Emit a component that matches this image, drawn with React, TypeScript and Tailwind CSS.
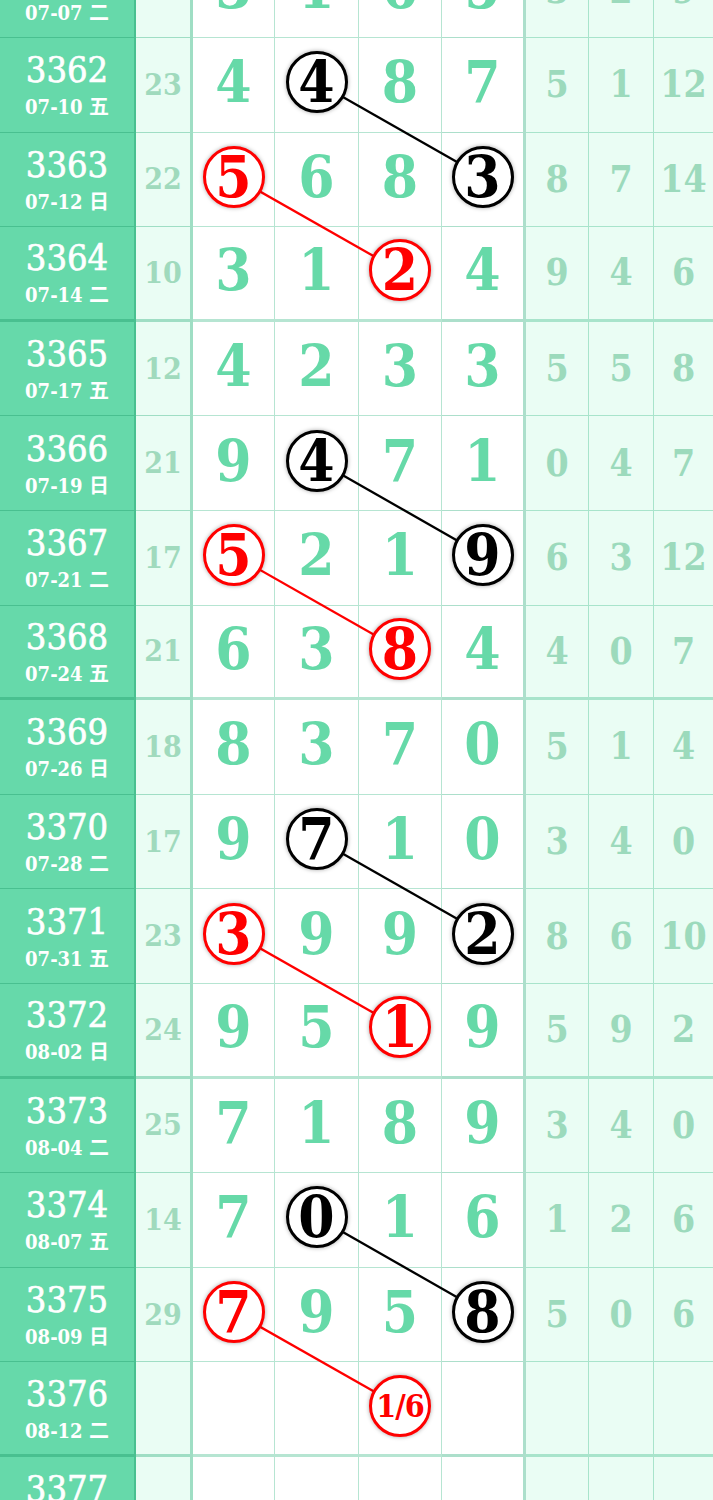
import React from "react";

type Mark = { col: number; color: "red" | "black"; text?: string };
type Row = {
  no: string;
  date: string;
  sum?: string;
  d?: string[];
  r?: string[];
  marks?: Mark[];
};

const rows: Row[] = [
  { no: "3361", date: "07-07 二", sum: "15", d: ["3", "1", "6", "5"], r: ["3", "2", "9"] },
  { no: "3362", date: "07-10 五", sum: "23", d: ["4", "4", "8", "7"], r: ["5", "1", "12"], marks: [{ col: 1, color: "black" }] },
  { no: "3363", date: "07-12 日", sum: "22", d: ["5", "6", "8", "3"], r: ["8", "7", "14"], marks: [{ col: 0, color: "red" }, { col: 3, color: "black" }] },
  { no: "3364", date: "07-14 二", sum: "10", d: ["3", "1", "2", "4"], r: ["9", "4", "6"], marks: [{ col: 2, color: "red" }] },
  { no: "3365", date: "07-17 五", sum: "12", d: ["4", "2", "3", "3"], r: ["5", "5", "8"] },
  { no: "3366", date: "07-19 日", sum: "21", d: ["9", "4", "7", "1"], r: ["0", "4", "7"], marks: [{ col: 1, color: "black" }] },
  { no: "3367", date: "07-21 二", sum: "17", d: ["5", "2", "1", "9"], r: ["6", "3", "12"], marks: [{ col: 0, color: "red" }, { col: 3, color: "black" }] },
  { no: "3368", date: "07-24 五", sum: "21", d: ["6", "3", "8", "4"], r: ["4", "0", "7"], marks: [{ col: 2, color: "red" }] },
  { no: "3369", date: "07-26 日", sum: "18", d: ["8", "3", "7", "0"], r: ["5", "1", "4"] },
  { no: "3370", date: "07-28 二", sum: "17", d: ["9", "7", "1", "0"], r: ["3", "4", "0"], marks: [{ col: 1, color: "black" }] },
  { no: "3371", date: "07-31 五", sum: "23", d: ["3", "9", "9", "2"], r: ["8", "6", "10"], marks: [{ col: 0, color: "red" }, { col: 3, color: "black" }] },
  { no: "3372", date: "08-02 日", sum: "24", d: ["9", "5", "1", "9"], r: ["5", "9", "2"], marks: [{ col: 2, color: "red" }] },
  { no: "3373", date: "08-04 二", sum: "25", d: ["7", "1", "8", "9"], r: ["3", "4", "0"] },
  { no: "3374", date: "08-07 五", sum: "14", d: ["7", "0", "1", "6"], r: ["1", "2", "6"], marks: [{ col: 1, color: "black" }] },
  { no: "3375", date: "08-09 日", sum: "29", d: ["7", "9", "5", "8"], r: ["5", "0", "6"], marks: [{ col: 0, color: "red" }, { col: 3, color: "black" }] },
  { no: "3376", date: "08-12 二", marks: [{ col: 2, color: "red", text: "1/6" }] },
  { no: "3377", date: "08-15 五" },
];

const RH = 94.6;
const CY = 44.3;
const COLX = [233.5, 316.5, 400, 482.5];

const links: { a: [number, number]; b: [number, number]; color: string }[] = [
  { a: [1, 1], b: [2, 3], color: "#000" },
  { a: [2, 0], b: [3, 2], color: "#ff0000" },
  { a: [5, 1], b: [6, 3], color: "#000" },
  { a: [6, 0], b: [7, 2], color: "#ff0000" },
  { a: [9, 1], b: [10, 3], color: "#000" },
  { a: [10, 0], b: [11, 2], color: "#ff0000" },
  { a: [13, 1], b: [14, 3], color: "#000" },
  { a: [14, 0], b: [15, 2], color: "#ff0000" },
];

const midW = ["w-[82px]", "w-[84px]", "w-[83px]", "w-[84px]"];
const rightW = ["w-[63px]", "w-[65px]", "flex-1"];

function Circle({ m, value }: { m: Mark; value: string }) {
  const red = m.color === "red";
  return (
    <div
      className={
        red
          ? "relative z-10 flex h-[62px] w-[62px] items-center justify-center rounded-full border-[3px] border-[#ff0000] bg-white shadow-[0_0_4px_rgba(0,0,0,0.35)]"
          : "relative z-10 flex h-[62px] w-[62px] items-center justify-center rounded-full border-[3px] border-black bg-white shadow-[0_0_4px_rgba(0,0,0,0.35)]"
      }
    >
      {m.text ? (
        <span className="text-[32px] font-bold leading-none tracking-[-1px] text-[#ff0000]">{m.text}</span>
      ) : (
        <span className={red ? "text-[58px] font-bold leading-none text-[#ff0000]" : "text-[58px] font-bold leading-none text-black"}>
          {value}
        </span>
      )}
    </div>
  );
}

function RowView({ row, i }: { row: Row; i: number }) {
  const thick = i % 4 === 3;
  const bb = thick ? "border-b-[3px]" : "border-b";
  return (
    <div className="flex h-[94.6px]">
      <div
        className={`flex w-[136px] shrink-0 flex-col items-center justify-center gap-[9px] border-r-2 border-[#1f9a6a]/40 bg-[#66d9aa] ${bb}`}
      >
        <span className="text-[36px] leading-none text-white [-webkit-text-stroke:0.6px_#fff]">{row.no}</span>
        <span className="text-[20px] font-bold leading-none text-white">{row.date}</span>
      </div>
      <div
        className={`flex w-[57px] shrink-0 items-center justify-center border-r-[3px] border-[#2fae7c]/40 bg-[#eafdf4] ${bb}`}
      >
        <span className="text-[30px] font-bold leading-none text-[#a0dabd]">{row.sum ?? ""}</span>
      </div>
      {[0, 1, 2, 3].map((c) => {
        const mark = row.marks?.find((m) => m.col === c);
        const v = row.d ? row.d[c] : "";
        return (
          <div
            key={c}
            className={`flex shrink-0 items-center justify-center bg-white pb-[5px] ${midW[c]} ${
              c === 3 ? "border-r-[3px] border-[#2fae7c]/40" : "border-r border-[#2fb47e]/35"
            } ${bb}`}
          >
            {mark ? (
              <Circle m={mark} value={v} />
            ) : (
              <span className="text-[58px] font-bold leading-none text-[#66d9a8]">{v}</span>
            )}
          </div>
        );
      })}
      {[0, 1, 2].map((c) => (
        <div
          key={c}
          className={`flex shrink-0 items-center justify-center bg-[#eafdf4] ${rightW[c]} ${
            c < 2 ? "border-r border-[#2fb47e]/35" : "border-[#2fb47e]/35"
          } ${thick ? "border-[#2fae7c]/40" : ""} ${bb}`}
        >
          <span className="text-[37px] font-bold leading-none text-[#9cdabc]">{row.r ? row.r[c] : ""}</span>
        </div>
      ))}
    </div>
  );
}

export default function App() {
  return (
    <div className="h-[1500px] w-[713px] overflow-hidden bg-white font-['DejaVu_Serif_Condensed','Liberation_Serif','Noto_Sans_CJK_SC',serif]">
      <div className="relative -mt-[56.6px]">
        {rows.map((row, i) => (
          <RowView key={row.no} row={row} i={i} />
        ))}
        <svg
          className="pointer-events-none absolute left-0 top-0"
          width={713}
          height={rows.length * RH}
          viewBox={`0 0 713 ${rows.length * RH}`}
        >
          {links.map((l, k) => (
            <line
              key={k}
              x1={COLX[l.a[1]]}
              y1={l.a[0] * RH + CY}
              x2={COLX[l.b[1]]}
              y2={l.b[0] * RH + CY}
              stroke={l.color}
              strokeWidth={2.3}
            />
          ))}
        </svg>
      </div>
    </div>
  );
}
